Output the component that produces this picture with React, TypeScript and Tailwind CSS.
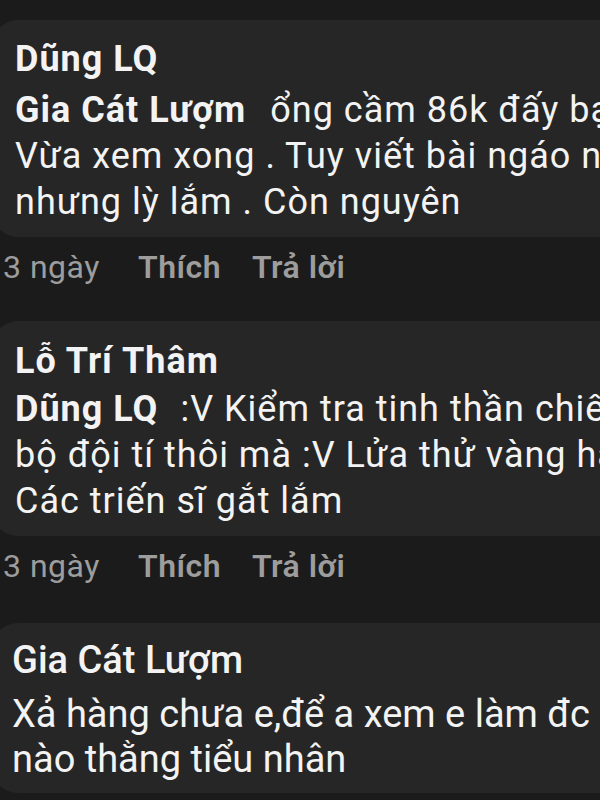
function Meta() {
  return (
    <div className="flex items-center pl-[3px] mt-[7px] text-[32px] leading-[46px] tracking-[0.5px] text-[#9d9d9d] whitespace-nowrap">
      <span className="w-[135px]">3 ngày</span>
      <span className="w-[114px] font-semibold">Thích</span>
      <span className="font-semibold">Trả lời</span>
    </div>
  );
}

export default function App() {
  return (
    <div
      className="w-[600px] h-[800px] overflow-hidden bg-[#1b1b1b] text-[#f3f3f3] pt-[20px]"
      style={{ fontFamily: "Roboto, 'Noto Sans', sans-serif" }}
    >
      {/* comment 1 */}
      <div className="ml-[-8px] w-[900px] rounded-[26px] bg-[#262626] pl-[23px] pt-[16px] pb-[12px] text-[36px] leading-[46px] tracking-[1px] whitespace-nowrap">
        <div className="font-bold mb-[5px]">Dũng LQ</div>
        <div>
          <span className="font-bold">Gia Cát Lượm</span>
          <span className="ml-[24px]">ổng cầm 86k đấy bạn</span>
        </div>
        <div>Vừa xem xong . Tuy viết bài ngáo ngơ</div>
        <div>nhưng lỳ lắm . Còn nguyên</div>
      </div>
      <Meta />

      {/* comment 2 */}
      <div className="mt-[31px] ml-[-8px] w-[900px] rounded-[26px] bg-[#262626] pl-[23px] pt-[17px] pb-[12px] text-[36px] leading-[46px] tracking-[1px] whitespace-nowrap">
        <div className="font-bold mb-[2px]">Lỗ Trí Thâm</div>
        <div>
          <span className="font-bold">Dũng LQ</span>
          <span className="ml-[22px]">:V Kiểm tra tinh thần chiến</span>
        </div>
        <div>bộ đội tí thôi mà :V Lửa thử vàng hả</div>
        <div>Các triến sĩ gắt lắm</div>
      </div>
      <Meta />

      {/* comment 3 */}
      <div className="mt-[34px] ml-[-8px] w-[900px] rounded-[26px] bg-[#262626] pl-[20px] pt-[14px] pb-[11px] text-[38px] leading-[45px] whitespace-nowrap">
        <div className="font-medium leading-[46px] mb-[9px]">Gia Cát Lượm</div>
        <div>Xả hàng chưa e,để a xem e làm đc gì</div>
        <div>nào thằng tiểu nhân</div>
      </div>
    </div>
  );
}
